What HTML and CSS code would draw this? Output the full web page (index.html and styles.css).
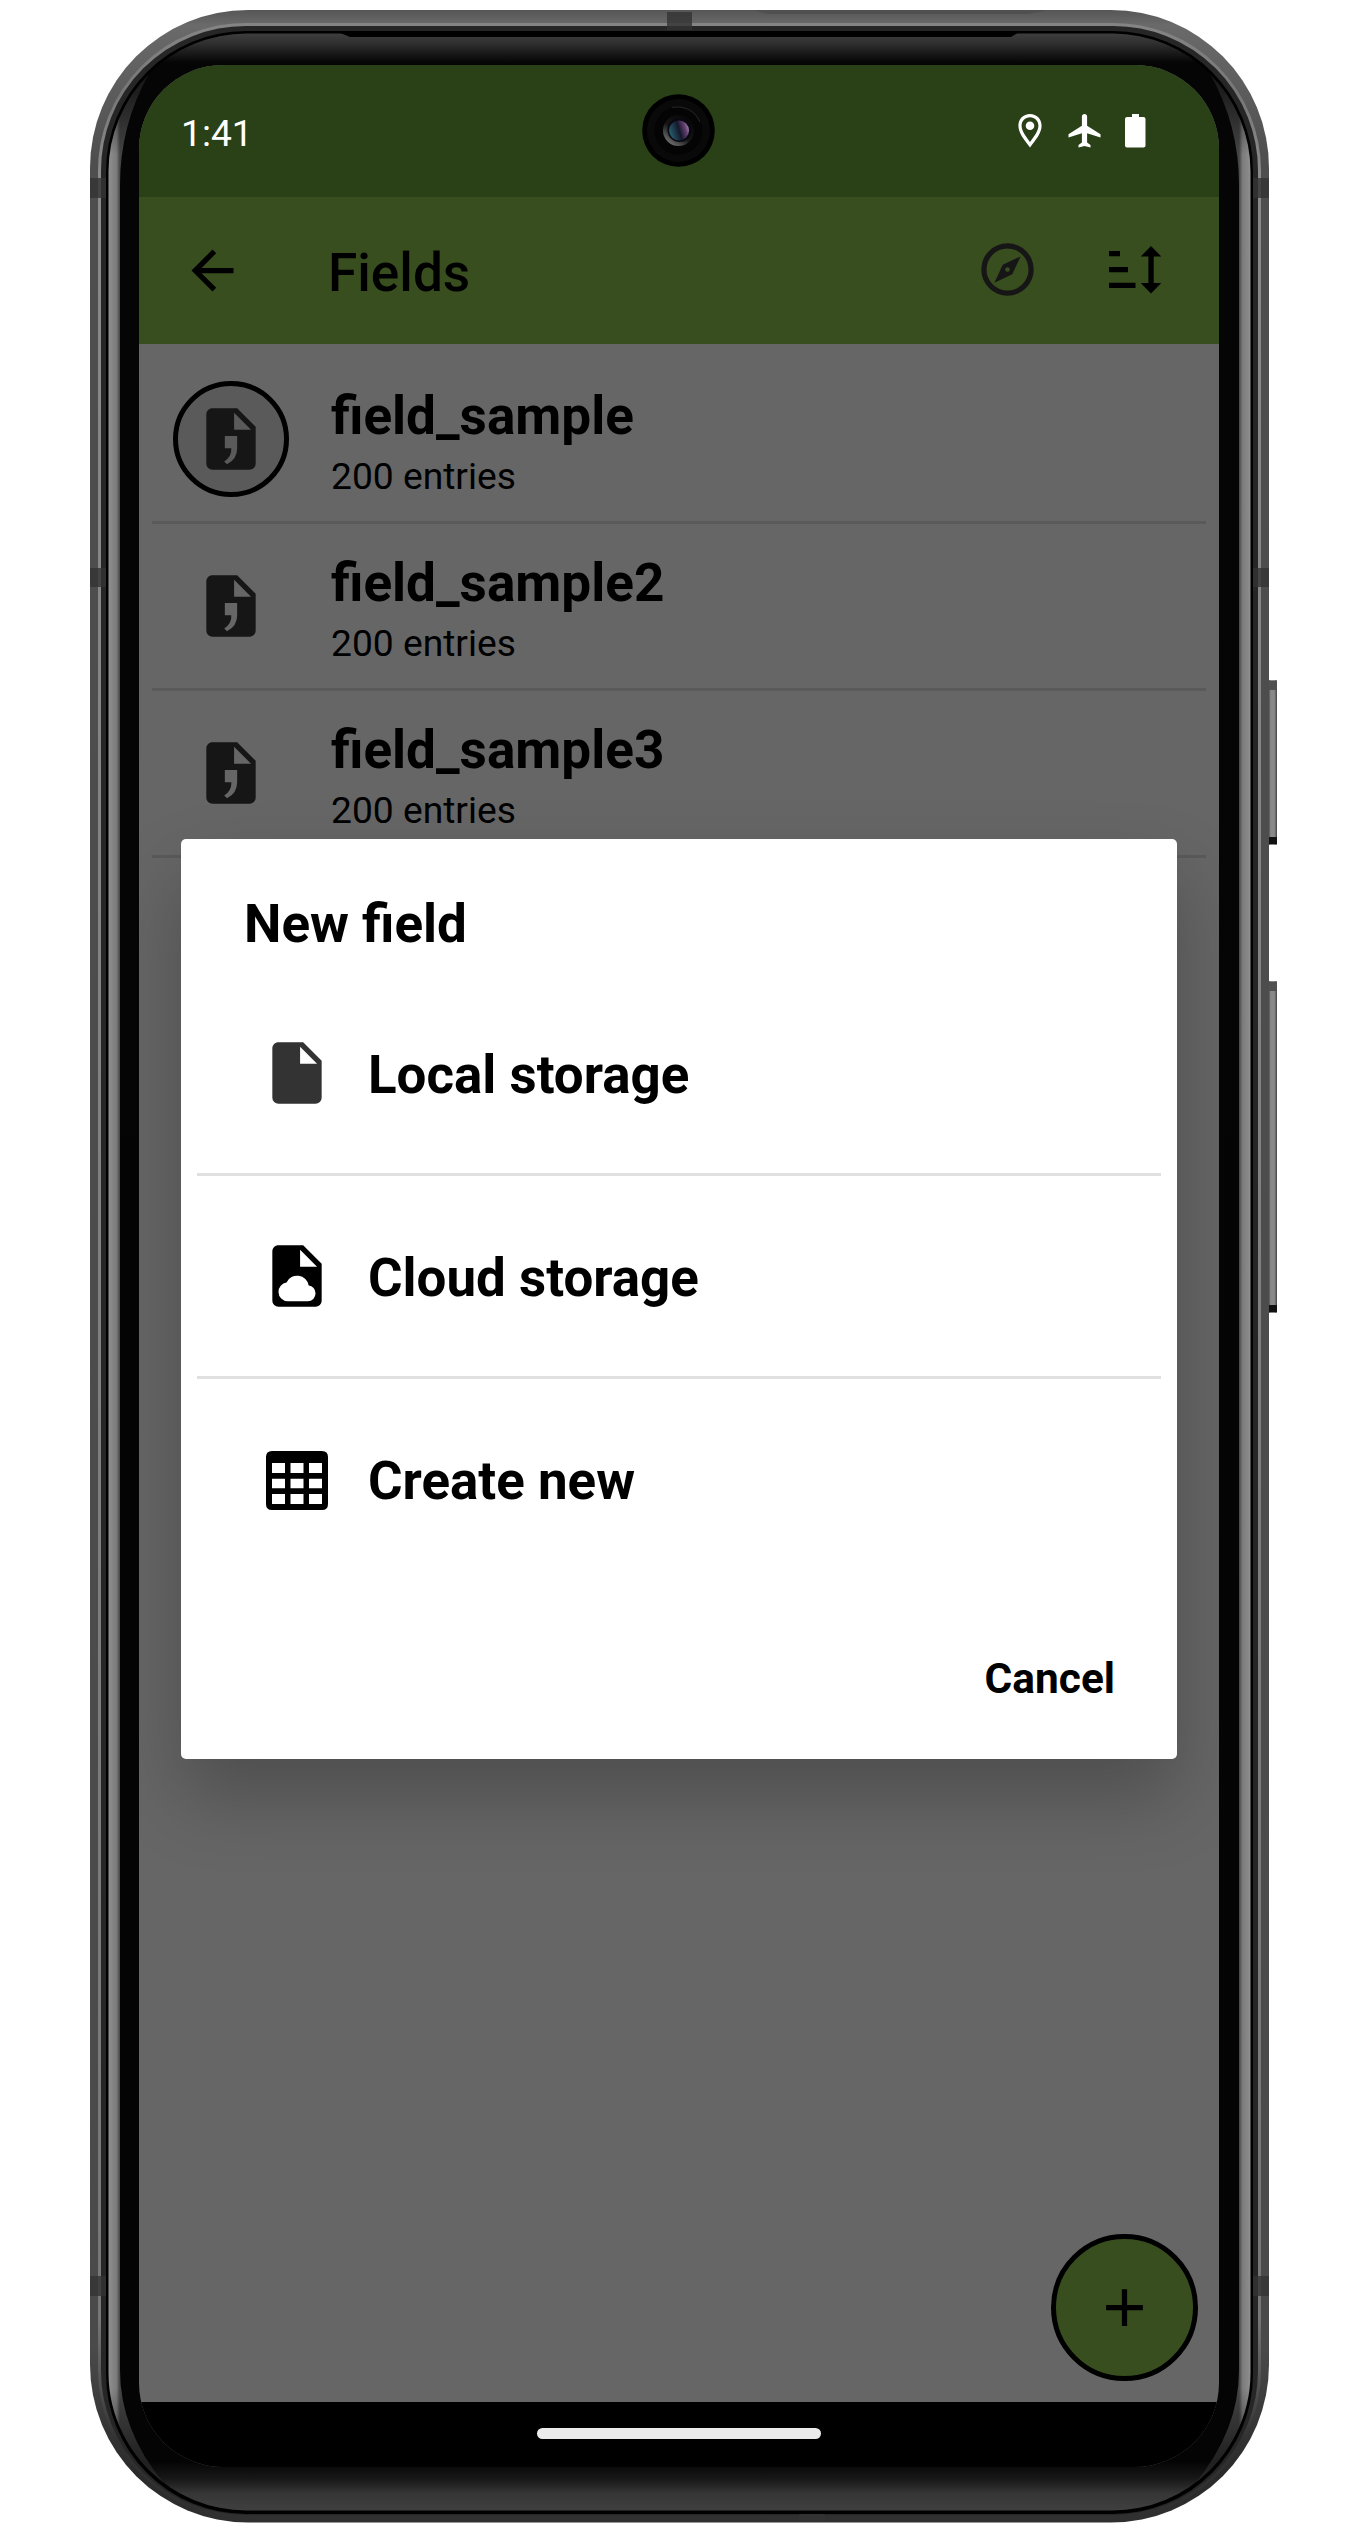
FILE: index.html
```html
<!DOCTYPE html>
<html lang="en">
<head>
<meta charset="utf-8">
<title>Fields</title>
<link rel="stylesheet" href="styles.css">
</head>
<body>
<svg class="symbols" aria-hidden="true">
  <symbol id="file-entry" viewBox="0 0 24 24">
    <path fill-rule="evenodd" d="M6 2C4.89 2 4 2.89 4 4V20A2 2 0 0 0 6 22H18A2 2 0 0 0 20 20V8L14 2ZM13 3.5V9H18.5ZM10 11H14V15Q14 18.6 10.7 20.2L9.8 19.3Q12.3 17.6 12.1 15H10Z"/>
  </symbol>
</svg>
<div class="phone">
  <svg class="frame" viewBox="0 0 1367 2533" aria-hidden="true">
    <defs>
      <linearGradient id="shell" gradientUnits="userSpaceOnUse" x1="0" y1="10" x2="0" y2="2523">
        <stop offset="0" stop-color="#565656"/><stop offset=".006" stop-color="#6a6a6a"/><stop offset=".06" stop-color="#4e4e4e"/><stop offset=".93" stop-color="#4a4a4a"/><stop offset=".98" stop-color="#2a2a2a"/><stop offset="1" stop-color="#303030"/>
      </linearGradient>
      <linearGradient id="shine" gradientUnits="userSpaceOnUse" x1="0" y1="20" x2="0" y2="2518">
        <stop offset="0" stop-color="#858585"/><stop offset=".03" stop-color="#777"/><stop offset=".06" stop-color="#8a8a8a"/><stop offset=".92" stop-color="#777"/><stop offset=".97" stop-color="#303030"/>
      </linearGradient>
      <linearGradient id="glass" gradientUnits="userSpaceOnUse" x1="0" y1="33" x2="0" y2="2511">
        <stop offset="0" stop-color="#3e3e3e"/><stop offset=".004" stop-color="#303030"/><stop offset=".012" stop-color="#050505"/><stop offset=".98" stop-color="#040404"/><stop offset=".987" stop-color="#181818"/><stop offset=".993" stop-color="#363636"/><stop offset="1" stop-color="#404040"/>
      </linearGradient>
      <linearGradient id="bevelL" gradientUnits="userSpaceOnUse" x1="108" y1="0" x2="120" y2="0">
        <stop offset="0" stop-color="#909090"/><stop offset=".7" stop-color="#7c7c7c"/><stop offset="1" stop-color="#444"/>
      </linearGradient>
      <linearGradient id="bevelR" gradientUnits="userSpaceOnUse" x1="1251" y1="0" x2="1239" y2="0">
        <stop offset="0" stop-color="#909090"/><stop offset=".7" stop-color="#7c7c7c"/><stop offset="1" stop-color="#444"/>
      </linearGradient>
      <linearGradient id="fade" gradientUnits="userSpaceOnUse" x1="0" y1="70" x2="0" y2="2485">
        <stop offset="0" stop-color="#333"/><stop offset=".035" stop-color="#fff"/><stop offset=".96" stop-color="#fff"/><stop offset="1" stop-color="#444"/>
      </linearGradient>
      <mask id="bevel-fade" maskUnits="userSpaceOnUse" x="0" y="0" width="1367" height="2533"><rect width="1367" height="2533" fill="url(#fade)"/></mask>
      <linearGradient id="key" x1="0" y1="0" x2="1" y2="0">
        <stop offset="0" stop-color="#333"/><stop offset=".3" stop-color="#898989"/><stop offset=".7" stop-color="#898989"/><stop offset="1" stop-color="#444"/>
      </linearGradient>
    </defs>
    <g fill="url(#key)">
      <rect x="1268" y="680" width="9" height="165" rx="1"/>
      <rect x="1268" y="981" width="9" height="332" rx="1"/>
    </g>
    <path fill="#111" d="M1268 837h9v7h-9zM1268 1305h9v7h-9z"/>
    <path fill="#505050" d="M1268 681h9v9h-9zM1268 982h9v9h-9z"/>
    <rect x="90" y="10" width="1179" height="2512.5" rx="158" fill="url(#shell)"/>
    <path fill="#505050" d="M755 10H1045L1040 12L1028 14H768Q760 13 755 10Z"/>
    <rect x="99.5" y="24.5" width="1160" height="2492" rx="146" fill="#262626" stroke="url(#shine)" stroke-width="3"/>
    <g fill="#333" fill-opacity=".8">
      <path d="M667 12h25v18h-25zM799 2514h26v8h-26z"/>
      <path d="M90 178h16v20h-16zM90 568h16v19h-16zM90 2276h16v20h-16zM1253 178h16v20h-16zM1253 568h16v19h-16zM1253 2276h16v20h-16z"/>
    </g>
    <rect x="106" y="31" width="1147" height="2483" rx="140" fill="#000"/>
    <rect x="108.5" y="33.5" width="1142" height="2477" rx="138" fill="url(#glass)"/>
    <path fill="#000" d="M338 32H1019L1011 37H350Z"/>
    <g mask="url(#bevel-fade)">
      <path fill="url(#bevelL)" d="M149 74A138 138 0 0 0 108.5 171.5V2372.5A138 138 0 0 0 163.5 2482.7Q120 2430 120 2370V185Q120 125 149 74Z"/>
      <path fill="url(#bevelR)" d="M1210 74A138 138 0 0 1 1250.500 171.500V2372.500A138 138 0 0 1 1195.500 2482.700Q1239 2430 1239 2370V185Q1239 125 1210 74Z"/>
    </g>
  </svg>

  <main class="screen">
    <div class="status">
      <span class="time">1:41</span>
      <div class="status-icons">
        <svg width="24" height="34" viewBox="0 0 24 34"><path fill="#fff" fill-rule="evenodd" d="M12 0C5.300 0 .4 5 .4 11.700C.4 19 6 25.500 12 33.500C18 25.500 23.600 19 23.600 11.700C23.600 5 18.700 0 12 0ZM12 3.300C16.800 3.300 20.400 7 20.400 11.700C20.400 17 16.500 21.500 12 28C7.500 21.500 3.600 17 3.600 11.700C3.600 7 7.200 3.300 12 3.300Z"/><circle cx="12" cy="11.700" r="4.300" fill="#fff"/></svg>
        <svg width="33" height="34" viewBox="0 0 33 34"><path fill="#fff" d="M32.500 23.500V20.200L19.100 11.700V2.600C19.100 1.200 18 0 16.500 0S13.900 1.200 13.900 2.600V11.700L.5 20.200V23.500L13.900 19.300V28.500L10.500 31V33.500L16.500 31.900L22.500 33.500V31L19.100 28.500V19.300Z"/></svg>
        <svg width="21" height="34" viewBox="0 0 21 34"><path fill="#fff" d="M7 0H14V3H18.500Q20.500 3 20.500 5V31.500Q20.500 33.500 18.500 33.500H2Q0 33.500 0 31.500V5Q0 3 2 3H7Z"/></svg>
      </div>
    </div>
    <header class="appbar">
      <svg class="back" viewBox="0 0 24 24"><path d="M20 11H7.830L13.420 5.410L12 4L4 12L12 20L13.410 18.590L7.830 13H20Z"/></svg>
      <h1 class="appbar-title">Fields</h1>
      <svg class="compass" viewBox="0 0 24 24"><path fill="#161616" d="M7 17L10.200 10.200L17 7L13.800 13.800ZM12 11.100A.9.9 0 0 0 11.100 12A.9.9 0 0 0 12 12.900A.9.9 0 0 0 12.900 12A.9.9 0 0 0 12 11.100M12 2A10 10 0 0 1 22 12A10 10 0 0 1 12 22A10 10 0 0 1 2 12A10 10 0 0 1 12 2M12 4A8 8 0 0 0 4 12A8 8 0 0 0 12 20A8 8 0 0 0 20 12A8 8 0 0 0 12 4Z"/></svg>
      <svg class="sort" viewBox="0 0 52 48"><path d="M0 5h11v5.300H0zM0 21h19v5.300H0zM0 36.700h26.500V42H0zM42 0L52.300 10.500H44.700V37H52.300L42 47.500L31.700 37H39.400V10.500H31.700Z"/></svg>
    </header>
    <ul class="fields">
      <li class="field">
        <span class="avatar selected"><svg viewBox="0 0 24 24"><use href="#file-entry"/></svg></span>
        <div class="field-text"><span class="name">field_sample</span><span class="count">200 entries</span></div>
      </li>
      <li class="field">
        <span class="avatar"><svg viewBox="0 0 24 24"><use href="#file-entry"/></svg></span>
        <div class="field-text"><span class="name">field_sample2</span><span class="count">200 entries</span></div>
      </li>
      <li class="field">
        <span class="avatar"><svg viewBox="0 0 24 24"><use href="#file-entry"/></svg></span>
        <div class="field-text"><span class="name">field_sample3</span><span class="count">200 entries</span></div>
      </li>
    </ul>
    <nav class="navbar"><span class="home"></span></nav>

    <svg class="camera" viewBox="0 0 73 73" aria-hidden="true">
      <defs>
        <linearGradient id="rim" x1=".1" y1=".9" x2=".7" y2=".1"><stop offset="0" stop-color="#777"/><stop offset=".5" stop-color="#151515"/><stop offset="1" stop-color="#080808"/></linearGradient>
        <linearGradient id="lens" x1="0" y1=".6" x2="1" y2=".3"><stop offset="0" stop-color="#286070"/><stop offset=".5" stop-color="#15182c"/><stop offset=".8" stop-color="#62406e"/><stop offset="1" stop-color="#a888b0"/></linearGradient>
      </defs>
      <circle cx="36.500" cy="36.500" r="36.300"/>
      <circle cx="36.500" cy="36.500" r="31.500" fill="#090909"/>
      <circle cx="36.500" cy="36.500" r="24" fill="#040404"/>
      <path d="M30 13.500A24 24 0 0 1 58 28" fill="none" stroke="#222" stroke-width="1.200"/>
      <circle cx="36.500" cy="36.500" r="15.500" fill="url(#rim)"/>
      <circle cx="37.500" cy="36" r="12" fill="#080810"/>
      <circle cx="37" cy="36.500" r="10" fill="url(#lens)"/>
    </svg>

    <button class="fab" aria-label="Add"><svg viewBox="0 0 24 24"><path d="M19 13H13V19H11V13H5V11H11V5H13V11H19Z"/></svg></button>

    <section class="dialog">
      <h2 class="dialog-title">New field</h2>
      <ul class="options">
        <li class="option">
          <svg viewBox="0 0 24 24"><path fill="#333" d="M13 9V3.500L18.500 9M6 2C4.890 2 4 2.890 4 4V20A2 2 0 0 0 6 22H18A2 2 0 0 0 20 20V8L14 2Z"/></svg>
          <span>Local storage</span>
        </li>
        <li class="option">
          <svg viewBox="0 0 24 24"><path fill-rule="evenodd" d="M6 2C4.890 2 4 2.890 4 4V20A2 2 0 0 0 6 22H18A2 2 0 0 0 20 20V8L14 2ZM13 3.500V9H18.500ZM9 20.200H15.500A2.500 2.500 0 0 0 18 17.600A2.500 2.500 0 0 0 15.800 15.100A3.800 3.800 0 0 0 8.600 14.100A3.100 3.100 0 0 0 6 17.200A3 3 0 0 0 9 20.200Z"/></svg>
          <span>Cloud storage</span>
        </li>
        <li class="option">
          <svg viewBox="0 0 74 74"><path fill-rule="evenodd" d="M12 9H62Q68 9 68 15V62Q68 68 62 68H12Q6 68 6 62V15Q6 9 12 9ZM12 21V31H25V21ZM30.500 21V31H43.500V21ZM49 21V31H62V21ZM12 36.700V46.300H25V36.700ZM30.500 36.700V46.300H43.500V36.700ZM49 36.700V46.300H62V36.700ZM12 52V62H25V52ZM30.500 52V62H43.500V52ZM49 52V62H62V52Z"/></svg>
          <span>Create new</span>
        </li>
      </ul>
      <div class="actions"><button class="cancel">Cancel</button></div>
    </section>
  </main>
</div>
</body>
</html>
```
FILE: styles.css
```css
* { box-sizing: border-box; }
body { margin: 0; background: #fff; font-family: Roboto, "Liberation Sans", sans-serif; color: #000; }
h1, h2, ul { margin: 0; padding: 0; list-style: none; }
button { border: 0; padding: 0; background: none; font: inherit; color: inherit; }
svg { display: block; flex: none; }
.symbols { position: absolute; width: 0; height: 0; }

.phone { position: relative; width: 1367px; height: 2533px; padding: 65px 148px 66px 139px; overflow: hidden; }
.frame { position: absolute; left: 0; top: 0; width: 1367px; height: 2533px; }
.screen {
  position: relative; display: flex; flex-direction: column;
  width: 1080px; height: 2402px; border-radius: 84px; overflow: hidden; background: #666;
}

.status {
  display: flex; justify-content: space-between; align-items: center;
  height: 132px; padding: 4px 74px 0 42px; background: #2a4017; color: #fff;
}
.time { font-size: 37.2px; line-height: 44px; }
.status-icons { display: flex; gap: 26px; margin-bottom: 4px; }
.status-icons svg:last-child { margin-left: -2px; margin-right: -1px; }

.appbar { display: flex; align-items: center; height: 147px; padding: 0 58px 0 42px; background: #384e1f; }
.back { width: 63px; height: 63px; }
.appbar-title { flex: 1; margin-left: 84px; padding-top: 4px; font-size: 53.2px; line-height: 62px; font-weight: 500; }
.compass { width: 63px; height: 63px; margin: 0 70px 2px 0; }
.sort { width: 52px; height: 48px; margin-bottom: 2px; overflow: visible; }

.fields { flex: 1; padding: 13px 13px 0; }
.field { display: flex; align-items: center; height: 167px; padding-left: 21px; border-bottom: 3px solid #5a5a5a; }
.avatar { display: grid; place-items: center; width: 116px; height: 116px; border-radius: 50%; }
.avatar svg { width: 74px; height: 74px; fill: #161616; }
.selected { border: 5px solid #000; background: #5a5a5a; }
.field-text { display: flex; flex-direction: column; gap: 8px; align-self: flex-start; margin-left: 42px; padding-top: 28px; }
.name { font-size: 53.1px; line-height: 62px; font-weight: 700; }
.count { font-size: 37.2px; line-height: 43px; }

.navbar { display: flex; justify-content: center; height: 65px; padding-top: 26px; background: #000; }
.home { width: 284px; height: 11px; border-radius: 6px; background: #ebebeb; }

.camera { position: absolute; left: 503px; top: 29px; width: 73px; height: 73px; }
.fab {
  position: absolute; right: 21px; bottom: 86px; width: 147px; height: 147px;
  display: grid; place-items: center; border: 5px solid #000; border-radius: 50%; background: #384e1f;
}
.fab svg { width: 63px; height: 63px; }

.dialog {
  position: absolute; left: 42px; top: 774px; width: 996px; height: 920px; padding-top: 54px;
  border-radius: 5px; background: #fff; box-shadow: 0 38px 76px rgba(0, 0, 0, .24);
}
.dialog-title { padding-left: 63px; font-size: 53px; line-height: 62px; font-weight: 700; }
.options { padding: 18px 16px 0; }
.option { display: flex; align-items: center; gap: 34px; height: 203px; padding-left: 63px; border-bottom: 3px solid #e0e0e0; }
.option:last-child { height: 200px; border-bottom: 0; }
.option svg { width: 74px; height: 74px; }
.option span { padding-top: 3px; font-size: 52.9px; line-height: 62px; font-weight: 700; }
.actions { display: flex; justify-content: flex-end; padding: 75px 62px 0 0; }
.cancel { font-size: 42.4px; line-height: 50px; font-weight: 700; }
```
